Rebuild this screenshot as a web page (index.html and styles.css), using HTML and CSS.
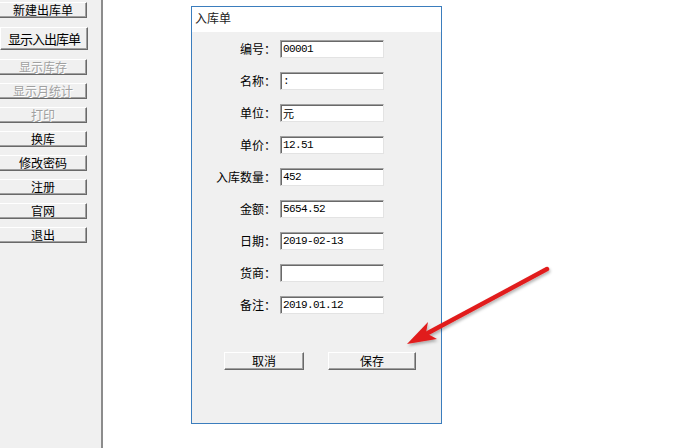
FILE: index.html
```html
<!DOCTYPE html>
<html lang="zh-CN">

<head>
    <meta charset="UTF-8">
    <meta name="viewport" content="width=device-width, initial-scale=1.0">
    <title>入库单</title>
    <link rel="stylesheet" href="styles.css">
</head>

<body>
    <div class="app">
        <div class="side">
            <button class="btn">新建出库单</button>
            <button class="btn big">显示入出库单</button>
            <button class="btn" disabled>显示库存</button>
            <button class="btn" disabled>显示月统计</button>
            <button class="btn" disabled>打印</button>
            <button class="btn">换库</button>
            <button class="btn">修改密码</button>
            <button class="btn">注册</button>
            <button class="btn">官网</button>
            <button class="btn">退出</button>
        </div>

        <div class="main">
            <div class="panel">
                <div class="title">入库单</div>
                <div class="body">
                    <form class="form" action="#">
                        <label>编号：</label>
                        <input type="text" value="00001">
                        <label>名称：</label>
                        <input type="text" value=":">
                        <label>单位：</label>
                        <input type="text" value="元">
                        <label>单价：</label>
                        <input type="text" value="12.51">
                        <label>入库数量：</label>
                        <input type="text" value="452">
                        <label>金额：</label>
                        <input type="text" value="5654.52">
                        <label>日期：</label>
                        <input type="text" value="2019-02-13">
                        <label>货商：</label>
                        <input type="text" value="">
                        <label>备注：</label>
                        <input type="text" value="2019.01.12">
                    </form>
                    <div class="actions">
                        <button class="btn cancel">取消</button>
                        <button class="btn save">保存</button>
                    </div>
                </div>
            </div>
        </div>
    </div>

    <!-- annotation arrow drawn over the screenshot -->
    <svg class="arrow" width="694" height="448" viewBox="0 0 694 448">
        <defs>
            <filter id="shade" x="-20%" y="-20%" width="140%" height="140%">
                <feDropShadow dx="1" dy="2" stdDeviation="1.5" flood-color="#000" flood-opacity="0.3" />
            </filter>
        </defs>
        <g filter="url(#shade)">
            <line x1="547" y1="269" x2="426" y2="334" stroke="#e11d1d" stroke-width="4.5" stroke-linecap="round" />
            <polygon points="407,344 428,322 426,333 437,339" fill="#e11d1d" />
        </g>
    </svg>
</body>

</html>
```

FILE: styles.css
```css
body {
    margin: 0;
    background: #fff;
    font-family: "Noto Sans CJK SC", "Liberation Sans", sans-serif;
    font-size: 12px;
    color: #000;
}

.app {
    display: flex;
    height: 448px;
    overflow: hidden;
}

.side {
    width: 101px;
    flex-shrink: 0;
    background: #f0f0f0;
    border-right: 2px solid #8c8c8c;
    display: flex;
    flex-direction: column;
    gap: 8px;
    padding-top: 2px;
}

.btn {
    height: 16px;
    padding: 0;
    font-family: "Noto Sans CJK SC", sans-serif;
    font-size: 12px;
    line-height: 12px;
    color: #000;
    background: #f0f0f0;
    border: 1px solid;
    border-color: #fff #696969 #696969 #fff;
    box-shadow: inset -1px -1px #a0a0a0;
    cursor: pointer;
}

.side .btn {
    width: 88px;
    margin-left: -1px;
}

.side .big {
    height: 23px;
    margin: 1px 0;
    font-size: 13px;
    letter-spacing: -1px;
}

.btn:disabled {
    color: #a0a0a0;
    text-shadow: 1px 1px #fff;
    cursor: default;
}

.main {
    flex: 1;
    padding: 6px 0 0 88px;
}

.panel {
    width: 251px;
    height: 418px;
    box-sizing: border-box;
    border: 1px solid #3b7dbd;
    display: flex;
    flex-direction: column;
}

.title {
    height: 25px;
    line-height: 22px;
    padding-left: 3px;
    background: #fff;
    color: #222;
}

.body {
    flex: 1;
    background: #f0f0f0;
    padding-top: 8px;
}

.form {
    display: grid;
    grid-template-columns: 84px 104px;
    column-gap: 4px;
    row-gap: 14px;
    margin: 0;
}

.form label {
    text-align: right;
    line-height: 18px;
    white-space: nowrap;
}

.form input[type="text"] {
    height: 18px;
    width: 104px;
    box-sizing: border-box;
    padding: 0 2px;
    margin: 0;
    font-family: "Liberation Mono", "Noto Sans CJK SC", monospace;
    font-size: 11px;
    letter-spacing: -0.6px;
    color: #000;
    background: #fff;
    border: 1px solid;
    border-color: #a0a0a0 #e3e3e3 #e3e3e3 #a0a0a0;
    box-shadow: inset 1px 1px #696969;
}

.form input[type="text"]:focus-visible {
    outline: none;
}

.actions {
    display: flex;
    gap: 24px;
    margin-top: 38px;
    padding-left: 32px;
}

.actions .btn {
    height: 18px;
}

.cancel {
    width: 80px;
}

.save {
    width: 88px;
}

.arrow {
    position: absolute;
    left: 0;
    top: 0;
    pointer-events: none;
}
```
